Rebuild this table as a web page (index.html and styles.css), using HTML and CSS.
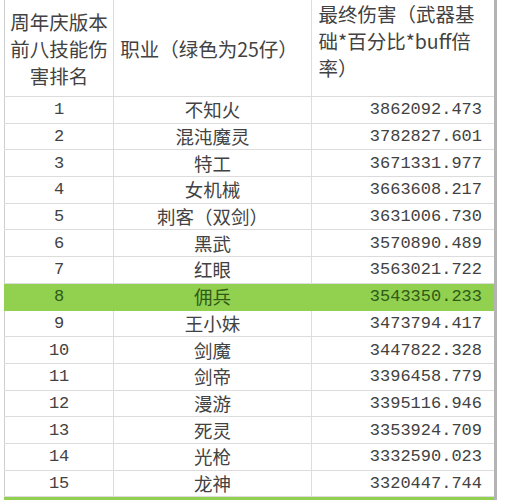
FILE: index.html
```html
<!DOCTYPE html>
<html>
<head>
<meta charset="utf-8">
<link rel="stylesheet" href="styles.css">
</head>
<body>
<table class="sheet">
  <colgroup><col class="c1"><col class="c2"><col class="c3"></colgroup>
  <tr class="head">
    <td class="rank">周年庆版本<br>前八技能伤<br>害排名</td>
    <td class="job-h">职业（绿色为25仔）</td>
    <td class="dmg-h">最终伤害（武器基<br>础*百分比*buff倍<br>率）</td>
  </tr>
  <tr><td class="num">1</td><td class="job">不知火</td><td class="val">3862092.473</td></tr>
  <tr><td class="num">2</td><td class="job">混沌魔灵</td><td class="val">3782827.601</td></tr>
  <tr><td class="num">3</td><td class="job">特工</td><td class="val">3671331.977</td></tr>
  <tr><td class="num">4</td><td class="job">女机械</td><td class="val">3663608.217</td></tr>
  <tr><td class="num">5</td><td class="job">刺客（双剑）</td><td class="val">3631006.730</td></tr>
  <tr><td class="num">6</td><td class="job">黑武</td><td class="val">3570890.489</td></tr>
  <tr><td class="num">7</td><td class="job">红眼</td><td class="val">3563021.722</td></tr>
  <tr class="green"><td class="num">8</td><td class="job">佣兵</td><td class="val">3543350.233</td></tr>
  <tr><td class="num">9</td><td class="job">王小妹</td><td class="val">3473794.417</td></tr>
  <tr><td class="num">10</td><td class="job">剑魔</td><td class="val">3447822.328</td></tr>
  <tr><td class="num">11</td><td class="job">剑帝</td><td class="val">3396458.779</td></tr>
  <tr><td class="num">12</td><td class="job">漫游</td><td class="val">3395116.946</td></tr>
  <tr><td class="num">13</td><td class="job">死灵</td><td class="val">3353924.709</td></tr>
  <tr><td class="num">14</td><td class="job">光枪</td><td class="val">3332590.023</td></tr>
  <tr><td class="num">15</td><td class="job">龙神</td><td class="val">3320447.744</td></tr>
  <tr class="green tail"><td></td><td></td><td></td></tr>
</table>
</body>
</html>
```
FILE: styles.css
```css
html, body {
  margin: 0;
  padding: 0;
  background: #ffffff;
}
body {
  padding-left: 4px;
  font-family: "Noto Sans CJK SC", "Noto Sans", sans-serif;
  color: #424242;
}
.sheet {
  border-collapse: collapse;
  table-layout: fixed;
  width: 493px;
  border-right: 3px solid #b4b4b4;
}
.c1 { width: 109px; }
.c2 { width: 197px; }
.c3 { width: 184px; }
.sheet td {
  border: 1px solid #dcdcdc;
  padding: 0;
  height: 25.7px;
  font-size: 18.5px;
  line-height: 25px;
  white-space: nowrap;
  overflow: hidden;
}
.sheet tr.head td {
  border-top: none;
  height: 96px;
  font-size: 19.5px;
  line-height: 27px;
  vertical-align: middle;
}
.sheet td:first-child { border-left: 1px solid #cfcfcf; }
.rank {
  text-align: center;
}
.job-h {
  padding-left: 6px !important;
}
.dmg-h {
  padding-left: 7px !important;
  vertical-align: top !important;
}
.num {
  text-align: center;
  font-family: "Liberation Mono", "DejaVu Sans Mono", monospace;
  font-size: 17px !important;
}
.job {
  text-align: center;
}
.val {
  text-align: right;
  padding-right: 12px !important;
  font-family: "Liberation Mono", "DejaVu Sans Mono", monospace;
  font-size: 17px !important;
}
.sheet tr.green td {
  background: #92d050;
  color: #2f5a17;
  border-color: #92d050;
}
.sheet tr.tail td {
  height: 8px;
}
```
